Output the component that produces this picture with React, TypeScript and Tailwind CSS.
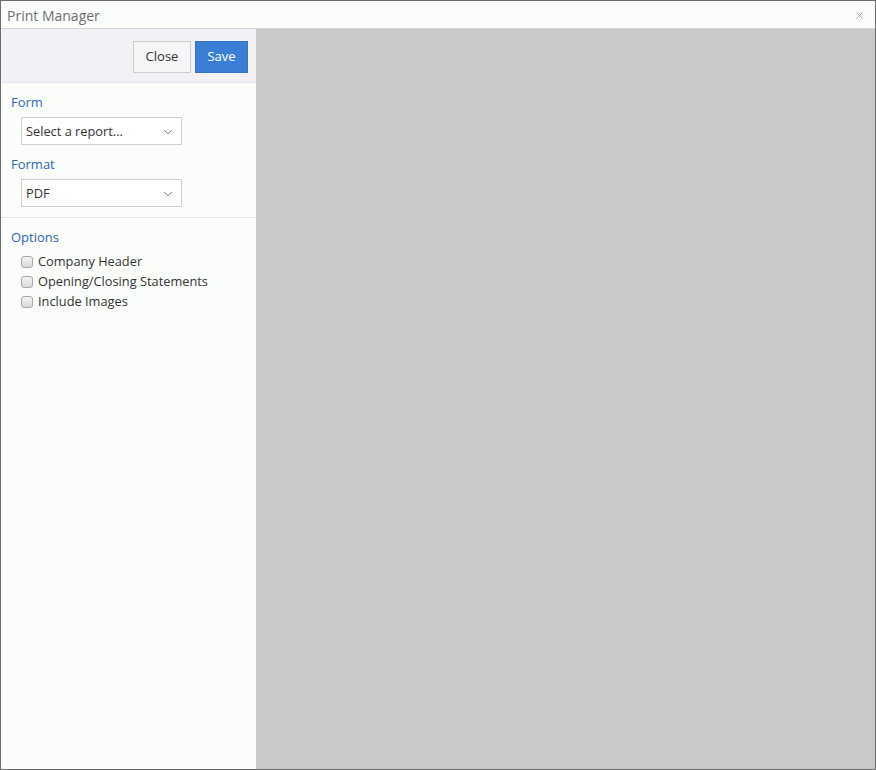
import { ChevronDown, X } from 'lucide-react'

const font = { fontFamily: '"Open Sans", "Noto Sans", sans-serif' }

function SelectBox({ value }: { value: string }) {
    return (
        <div className="ml-[10px] flex h-[28px] w-[161px] items-center justify-between border border-[#cfcfd4] bg-white pl-[4px] pr-[6px] pt-[1px] text-[12.8px] text-[#333]">
            <span>{value}</span>
            <ChevronDown size={14} strokeWidth={1.6} className="text-[#666]" />
        </div>
    )
}

function Check({ label }: { label: string }) {
    return (
        <label className="flex h-[20px] items-center gap-[5px] text-[12.8px] text-[#333]">
            <span className="h-[12px] w-[12px] rounded-[3px] border border-[#a8a8a8] bg-gradient-to-b from-[#f4f4f4] to-[#d9d9d9]" />
            {label}
        </label>
    )
}

export default function App() {
    return (
        <div style={font} className="flex h-[770px] w-[876px] flex-col border border-[#6e6e6e] bg-[#fbfdfb]">
            {/* title bar */}
            <div className="flex h-[28px] shrink-0 items-center justify-between border-b border-[#d4d4d4] pl-[6px] pr-[10px] pt-[2px]">
                <span className="text-[14px] text-[#6f6f6f]">Print Manager</span>
                <X size={11} strokeWidth={1.5} className="text-[#8a8a8a]" />
            </div>

            <div className="flex min-h-0 flex-1">
                {/* left panel */}
                <div className="w-[255px] shrink-0 bg-[#fbfdfb]">
                    <div className="flex h-[54px] items-start justify-end gap-[4px] border-b border-[#e6e4ea] bg-[#f3f1f5] pr-[8px] pt-[12px]">
                        <button className="h-[32px] w-[58px] border border-[#cccccc] bg-[#f6f5f7] text-[13px] text-[#333]">Close</button>
                        <button className="h-[32px] w-[53px] border border-[#3574c4] bg-[#3a7fd5] text-[13px] text-white">Save</button>
                    </div>

                    <div className="border-b border-[#e6e6e6] pb-[10px] pl-[10px] pt-[10px]">
                        <div className="text-[13px] leading-[18px] text-[#2f66b3]">Form</div>
                        <div className="mt-[6px]"><SelectBox value="Select a report..." /></div>
                        <div className="mt-[10px] text-[13px] leading-[18px] text-[#2f66b3]">Format</div>
                        <div className="mt-[6px]"><SelectBox value="PDF" /></div>
                    </div>

                    <div className="pl-[10px] pt-[10px]">
                        <div className="text-[13px] leading-[18px] text-[#2f66b3]">Options</div>
                        <div className="ml-[10px] mt-[6px] flex flex-col">
                            <Check label="Company Header" />
                            <Check label="Opening/Closing Statements" />
                            <Check label="Include Images" />
                        </div>
                    </div>
                </div>

                {/* preview area */}
                <div className="flex-1 bg-[#cbc8cc]" />
            </div>
        </div>
    )
}
